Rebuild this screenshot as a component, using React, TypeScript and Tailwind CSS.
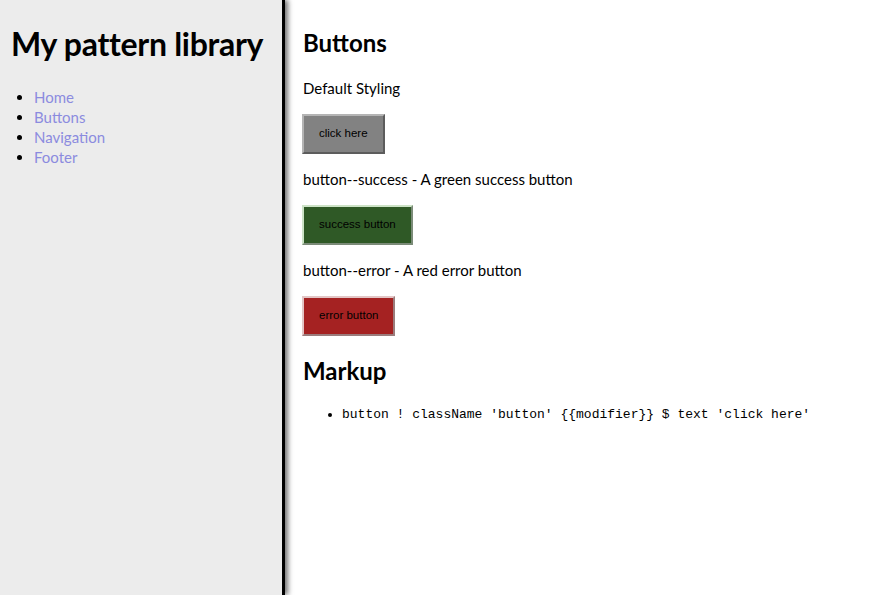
import React from 'react';

const navItems = ['Home', 'Buttons', 'Navigation', 'Footer'];

const buttons = [
  {
    note: 'Default Styling',
    label: 'click here',
    color: 'bg-[#828282] border-t-[#b4b4b4] border-l-[#b4b4b4] border-r-[#5c5c5c] border-b-[#5c5c5c]',
  },
  {
    note: 'button--success - A green success button',
    label: 'success button',
    color: 'bg-[#2f5926] border-t-[#cde3c7] border-l-[#cde3c7] border-r-[#7b8b78] border-b-[#7b8b78]',
  },
  {
    note: 'button--error - A red error button',
    label: 'error button',
    color: 'bg-[#a52222] border-t-[#e3c6c6] border-l-[#e3c6c6] border-r-[#9b7c7c] border-b-[#9b7c7c]',
  },
];

export default function App() {
  return (
    <div className="flex min-h-[595px] bg-white font-['Lato','Open_Sans',sans-serif] text-black">
      {/* Sidebar */}
      <aside className="relative z-10 w-[285px] shrink-0 border-r-[3px] border-black bg-[#ececec] shadow-[3px_0_5px_rgba(0,0,0,0.55)]">
        <h1 className="ml-[11px] mt-[25px] text-[32px] font-bold leading-[38px] tracking-[-0.3px]">
          My pattern library
        </h1>
        <ul className="mt-[24px] list-disc pl-[34px] text-[15px] leading-[20px]">
          {navItems.map(item => (
            <li key={item} className="text-black">
              <a href="#" className="text-[#8b8bdf]">{item}</a>
            </li>
          ))}
        </ul>
      </aside>

      {/* Main content */}
      <main className="flex-1 pl-[18px]">
        <h2 className="mt-[28px] text-[24px] font-bold leading-[29px]">Buttons</h2>

        {buttons.map((b, i) => (
          <div key={b.label} className={i === 0 ? 'mt-[21px]' : 'mt-[15px]'}>
            <p className="text-[15px] leading-[20px]">{b.note}</p>
            <button
              className={`-ml-[1px] mt-[16px] block h-[40px] border-2 px-[15px] font-['Liberation_Sans',Arial,sans-serif] text-[11.5px] text-black ${b.color}`}
            >
              {b.label}
            </button>
          </div>
        ))}

        <h2 className="mt-[20px] text-[24px] font-bold leading-[29px]">Markup</h2>
        <ul className="mt-[22px] list-disc pl-[39px] font-['Liberation_Mono','Courier_New',monospace] text-[13px] leading-[16px]">
          <li>button ! className 'button' {'{{modifier}}'} $ text 'click here'</li>
        </ul>
      </main>
    </div>
  );
}
